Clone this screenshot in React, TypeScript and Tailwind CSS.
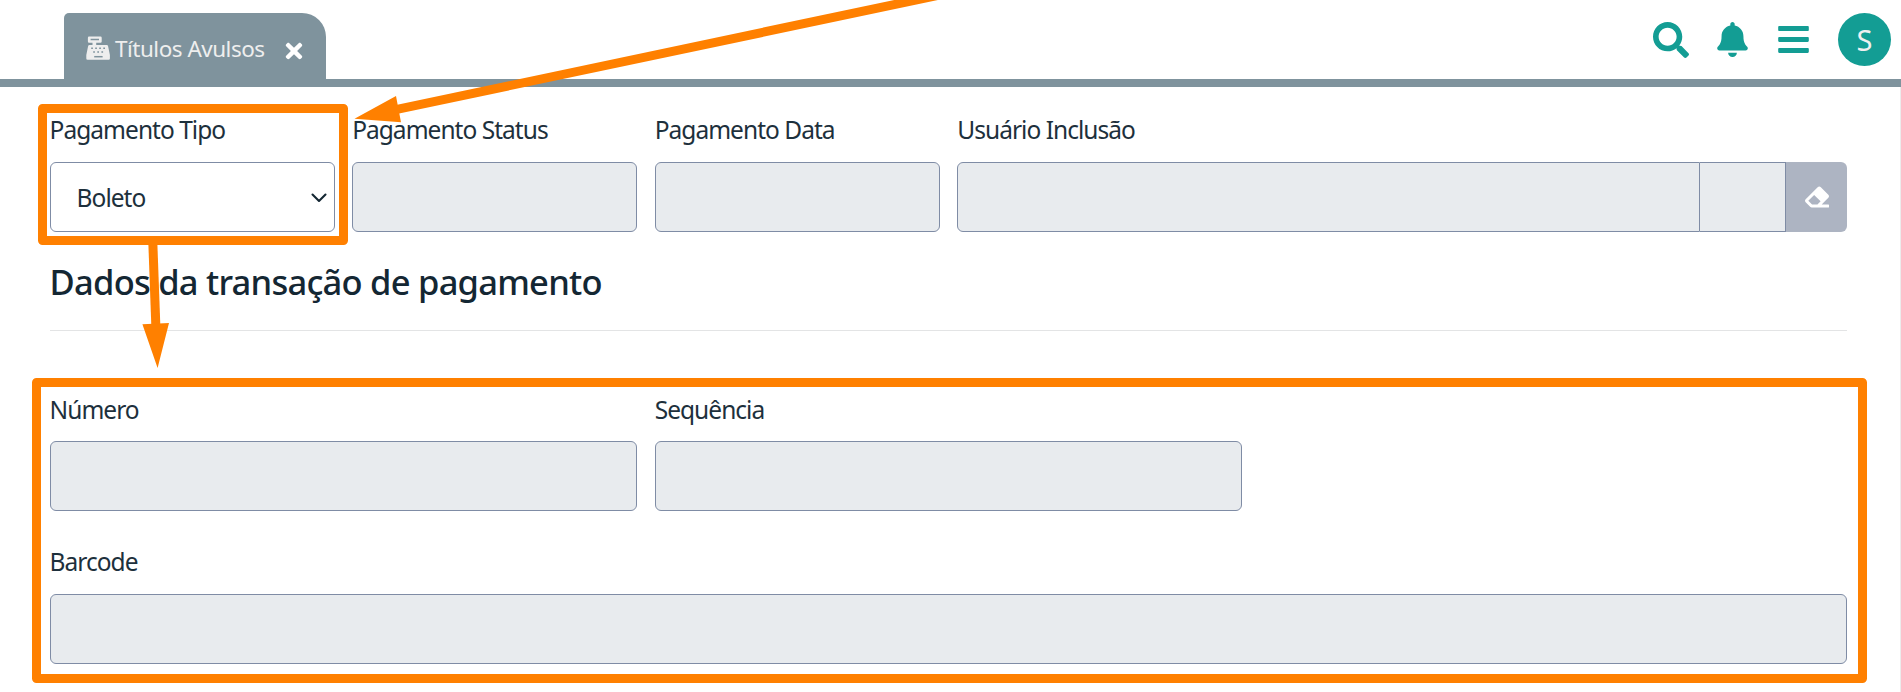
import type { ReactNode } from "react";
import { FaBars, FaBell, FaEraser, FaSearch, FaTimes } from "react-icons/fa";

const box = "h-[70px] rounded-[6px] border border-[#7f8ca5] bg-[#e8ebee]";

function Field({ label, className = "gap-3.5", children }: { label: string; className?: string; children?: ReactNode }) {
  return (
    <div className={`flex flex-col ${className}`}>
      <label className="h-[37px] whitespace-nowrap leading-[37px]">{label}</label>
      {children ?? <div className={box} />}
    </div>
  );
}

function RegisterIcon({ className }: { className: string }) {
  return (
    <svg className={className} viewBox="0 0 24 24" fill="none">
      <path d="M3 0.500 H14.500 Q15.700 0.500 15.700 1.700 V5.500 Q15.700 6.700 14.500 6.700 H10.200 V9 H20.700 Q21.900 9 22.100 10.200 L23.900 19 V22.600 Q23.900 23.800 22.700 23.800 H1.500 Q0.300 23.800 0.300 22.600 V19 L2.100 10.200 Q2.300 9 3.500 9 H6.500 V6.700 H3 Q1.900 6.700 1.900 5.500 V1.700 Q1.900 0.500 3 0.500 Z" fill="currentColor" />
      <g stroke="#7f939d" strokeWidth="1.500">
        <path d="M4.600 3.500 H13" />
        <path d="M8.200 20.700 H16.600" />
        <path d="M5.200 12.300 h1.700 M9.200 12.300 h1.700 M13.200 12.300 h1.700 M17.300 12.300 h1.700 M7.200 16 h1.700 M11.300 16 h1.700 M15.400 16 h1.700" />
      </g>
    </svg>
  );
}

function Annotations() {
  return (
    <svg className="pointer-events-none absolute left-0 top-0" width="1901" height="692" viewBox="0 0 1901 692" fill="none">
      <g stroke="#ff8000" strokeWidth="9" strokeLinejoin="round">
        <rect x="42.5" y="108.5" width="301" height="132" />
        <rect x="36.5" y="382.5" width="1826" height="296" />
        <path d="M397 109.4 L963.5 -10" />
        <path d="M152.8 242 L155.8 325" />
      </g>
      <path d="M354.500 118.800 L396 96 L401 122.300 Z M142.400 324.300 L169 323 L157.600 368 Z" fill="#ff8000" />
    </svg>
  );
}

export default function App() {
  return (
    <div className="relative h-[692px] w-[1901px] overflow-hidden bg-white font-['Noto_Sans',sans-serif] text-[24.5px] tracking-[-0.97px] text-[#1d303c]">
      <header className="flex h-[87px] items-end justify-between border-b-8 border-[#7f939d] pl-16 pr-2.5">
        <div className="flex h-[66px] w-[262px] items-center rounded-tl-[5px] rounded-tr-[24px] bg-[#7f939d] pl-[22px] text-[#eeeeee]">
          <RegisterIcon className="mt-1 size-6" />
          <span className="ml-[5px] mt-1.5 w-[151px] whitespace-nowrap text-[22.5px] tracking-[-0.5px]">Títulos Avulsos</span>
          <FaTimes className="ml-4 mt-2.5 size-6 text-white" />
        </div>
        <div className="mb-[13px] flex h-[53px] items-center text-[#139d94]">
          <FaSearch className="mr-[26px] size-9" />
          <FaBell className="mr-[26px] size-[35px]" />
          <FaBars className="mr-[27px] size-[35px]" />
          <div className="flex size-[53px] items-center justify-center rounded-full bg-[#139d94] pr-px text-[29px] text-[#f0f0f0]">S</div>
        </div>
      </header>

      <main className="h-[605px] border-r border-[#ececec] pl-[49.6px] pr-[52.6px] pt-6">
        <div className="grid grid-cols-6 gap-x-[17.5px]">
          <Field label="Pagamento Tipo">
            <div className="flex h-[70px] items-center justify-between rounded-[6px] border border-[#7f8ca5] bg-white pl-[26px] pr-[7px]">
              <span className="pt-0.5">Boleto</span>
              <svg className="mt-px" width="16" height="10" viewBox="0 0 16 10" fill="none" stroke="#142733" strokeWidth="2.1" strokeLinecap="round" strokeLinejoin="round">
                <path d="M1.500 1.500 L8 8 L14.500 1.500" />
              </svg>
            </div>
          </Field>
          <Field label="Pagamento Status" />
          <Field label="Pagamento Data" />
          <Field label="Usuário Inclusão" className="col-span-3 gap-3.5">
            <div className="flex h-[70px]">
              <div className="grow rounded-l-[6px] border border-[#7f8ca5] bg-[#e8ebee]" />
              <div className="w-[86px] border-y border-r border-[#7f8ca5] bg-[#e8ebee]" />
              <div className="flex w-[61.500px] items-center justify-center rounded-r-[6px] bg-[#adb4c2] text-white">
                <FaEraser className="size-6" />
              </div>
            </div>
          </Field>
        </div>

        <h2 className="mt-[25px] h-[74px] whitespace-nowrap border-b border-[#e3e4e5] text-[34.5px] font-medium leading-[50px] tracking-[-0.76px] text-[#142733]">
          Dados da transação de pagamento
        </h2>

        <div className="mt-[60px] grid grid-cols-6 gap-x-[17.5px]">
          <Field label="Número" className="col-span-2 gap-[13px]" />
          <Field label="Sequência" className="col-span-2 gap-[13px]" />
          <Field label="Barcode" className="col-span-6 mt-8 gap-3.5" />
        </div>
      </main>
      <Annotations />
    </div>
  );
}
